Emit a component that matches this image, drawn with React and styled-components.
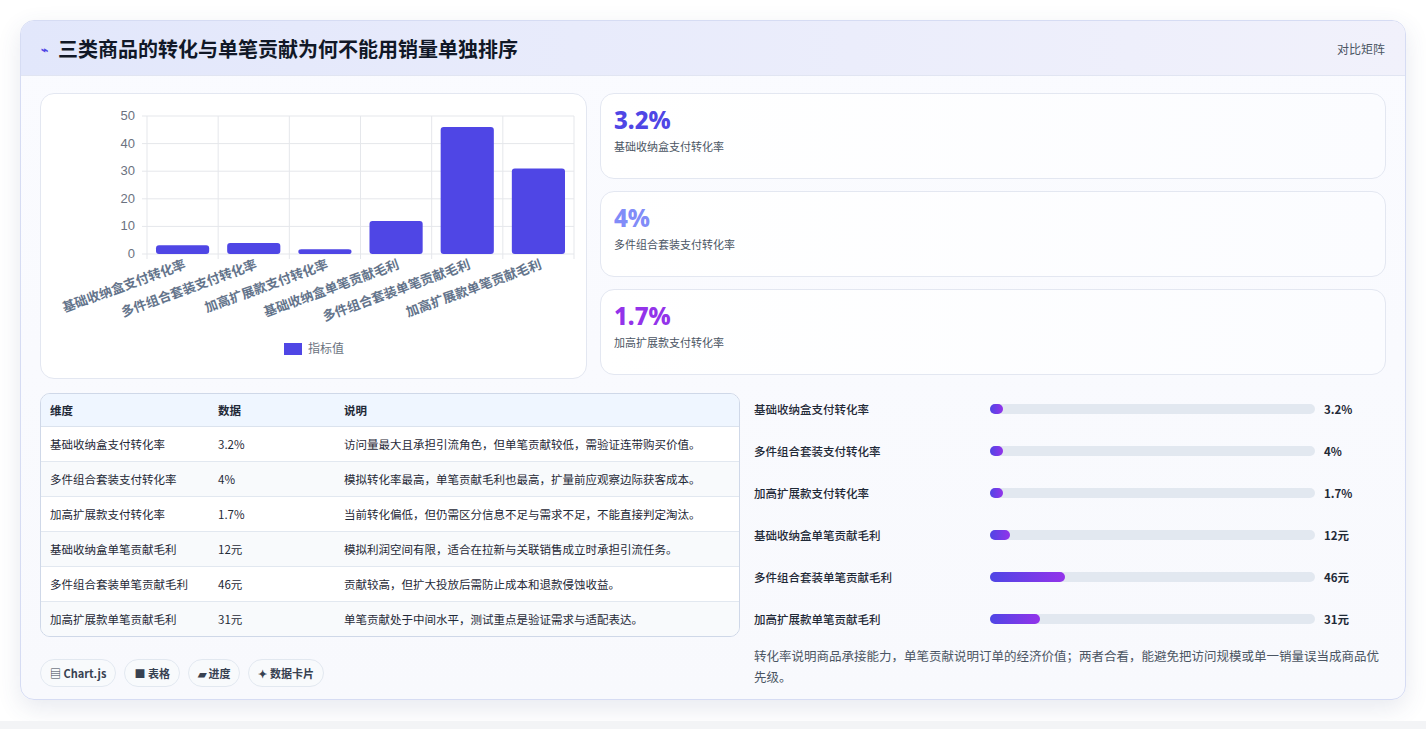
import styled, { createGlobalStyle } from "styled-components";

const Global = createGlobalStyle`
  body { margin: 0; background: #f3f4f6; font-family: "Noto Sans CJK SC", "Noto Sans", sans-serif; }
`;

const Page = styled.div`
  padding: 20px 20px 21px 20px;
  background: #fff;
`;
const Card = styled.div`
  border: 1px solid #d6dcf3;
  border-radius: 14px;
  background: linear-gradient(180deg, #fafbff, #f8f9fd);
  box-shadow: 0 8px 24px rgba(60, 70, 120, 0.12);
  overflow: hidden;
`;
const Header = styled.div`
  height: 54px;
  display: flex;
  align-items: center;
  justify-content: space-between;
  padding: 0 20px;
  background: linear-gradient(90deg, #e2e7fb, #f1f1fb);
  border-bottom: 1px solid #e1e5f2;
`;
const Title = styled.h1`
  margin: 0;
  font-size: 20px;
  font-weight: 700;
  color: #111827;
  display: flex;
  align-items: center;
  gap: 10px;
`;
const Tag = styled.span`
  font-size: 12px;
  color: #4b5563;
`;
const Body = styled.div`
  padding: 17px 19px 12px 19px;
  display: flex;
  flex-direction: column;
  gap: 14px;
`;
const TopRow = styled.div`
  display: grid;
  grid-template-columns: 547px 1fr;
  gap: 13px;
`;
const Panel = styled.div`
  background: #fff;
  border: 1px solid #e3e7f1;
  border-radius: 14px;
`;
const ChartPanel = styled(Panel)`
  height: 284px;
`;
const Stats = styled.div`
  display: flex;
  flex-direction: column;
  gap: 12px;
`;
const Stat = styled(Panel)`
  height: 86px;
  box-sizing: border-box;
  padding: 10px 13px;
  background: linear-gradient(90deg, #ffffff, #fbfcff);
`;
const StatValue = styled.div`
  font-size: 24px;
  font-weight: 800;
  font-family: "Noto Sans", sans-serif;
  color: ${(p) => p.$c};
  line-height: 32px;
`;
const StatLabel = styled.div`
  font-size: 11px;
  color: #4b5563;
  margin-top: 2px;
`;
const BottomRow = styled.div`
  display: grid;
  grid-template-columns: 700px 1fr;
  gap: 14px;
`;
const Left = styled.div`
  display: flex;
  flex-direction: column;
  gap: 22px;
`;
const Table = styled.table`
  width: 100%;
  border-collapse: separate;
  border-spacing: 0;
  border: 1px solid #cfd8e8;
  border-radius: 10px;
  overflow: hidden;
  font-size: 11.5px;
  color: #1f2937;
  background: #f8fafc;
`;
const Th = styled.th`
  text-align: left;
  font-weight: 600;
  height: 32px;
  padding: 0 9px;
  background: #eff6ff;
  border-bottom: 1px solid #dbe3ee;
`;
const Td = styled.td`
  height: 34px;
  padding: 0 9px;
  border-bottom: ${(p) => (p.$last ? "none" : "1px solid #e2e8f0")};
  background: ${(p) => (p.$alt ? "#f8fafc" : "#fff")};
`;
const Chips = styled.div`
  display: flex;
  gap: 8px;
`;
const Chip = styled.span`
  font-size: 11px;
  font-weight: 600;
  color: #374151;
  border: 1px solid #e2e8f0;
  background: #f8fafc;
  border-radius: 14px;
  padding: 5px 9px;
`;
const Bars = styled.div`
  display: flex;
  flex-direction: column;
  margin-top: -5px;
`;
const BarRow = styled.div`
  display: grid;
  grid-template-columns: 236px 334px 1fr;
  align-items: center;
  height: 42px;
  font-size: 11.5px;
  font-weight: 600;
  color: #1f2937;
`;
const BarLabel = styled.span`
  font-weight: 500;
`;
const Track = styled.div`
  height: 10px;
  background: #e2e8f0;
  border-radius: 5px;
  margin-right: 9px;
`;
const Fill = styled.div`
  height: 100%;
  border-radius: 5px;
  background: linear-gradient(90deg, #4f46e5, #9333ea);
`;
const Note = styled.p`
  margin: 5px 0 0;
  font-size: 12.5px;
  line-height: 21px;
  color: #4b5563;
`;

const labels = ["基础收纳盒支付转化率", "多件组合套装支付转化率", "加高扩展款支付转化率", "基础收纳盒单笔贡献毛利", "多件组合套装单笔贡献毛利", "加高扩展款单笔贡献毛利"];
const values = [3.2, 4, 1.7, 12, 46, 31];
const shown = ["3.2%", "4%", "1.7%", "12元", "46元", "31元"];
const notes = [
  "访问量最大且承担引流角色，但单笔贡献较低，需验证连带购买价值。",
  "模拟转化率最高，单笔贡献毛利也最高，扩量前应观察边际获客成本。",
  "当前转化偏低，但仍需区分信息不足与需求不足，不能直接判定淘汰。",
  "模拟利润空间有限，适合在拉新与关联销售成立时承担引流任务。",
  "贡献较高，但扩大投放后需防止成本和退款侵蚀收益。",
  "单笔贡献处于中间水平，测试重点是验证需求与适配表达。",
];

const Chart = () => {
  const x0 = 106, x1 = 533, y0 = 22, y1 = 160;
  const cw = (x1 - x0) / 6;
  const ys = (v) => y1 - (v / 50) * (y1 - y0);
  return (
    <svg width="546" height="284" style={{ display: "block" }}>
      {[0, 10, 20, 30, 40, 50].map((t) => (
        <g key={t}>
          <line x1={x0 - 5} x2={x1} y1={ys(t)} y2={ys(t)} stroke="#e5e7eb" />
          <text x={x0 - 12} y={ys(t) + 4} fontSize="13" fill="#6b7280" textAnchor="end" fontFamily="Liberation Sans">{t}</text>
        </g>
      ))}
      {[0, 1, 2, 3, 4, 5, 6].map((i) => (
        <line key={i} x1={x0 + i * cw} x2={x0 + i * cw} y1={y0} y2={y1 + 5} stroke="#e5e7eb" />
      ))}
      {values.map((v, i) => (
        <rect key={i} x={x0 + i * cw + 9} width={cw - 18} y={ys(v)} height={y1 - ys(v)} rx="3" fill="#4f46e5" />
      ))}
      {labels.map((l, i) => (
        <text key={l} transform={`translate(${x0 + i * cw + cw / 2 + 4},${y1 + 14}) rotate(-20)`} textAnchor="end" fontSize="13" fontWeight="600" fill="#64748b">{l}</text>
      ))}
      <rect x="243" y="249" width="18" height="12" fill="#4f46e5" />
      <text x="267" y="259" fontSize="12" fill="#6b7280">指标值</text>
    </svg>
  );
};

export default function App() {
  return (
    <Page>
      <Global />
      <Card>
        <Header>
          <Title><span style={{ color: "#4f46e5", fontSize: 12 }}>⌁</span>三类商品的转化与单笔贡献为何不能用销量单独排序</Title>
          <Tag>对比矩阵</Tag>
        </Header>
        <Body>
          <TopRow>
            <ChartPanel><Chart /></ChartPanel>
            <Stats>
              <Stat><StatValue $c="#4f46e5">3.2%</StatValue><StatLabel>基础收纳盒支付转化率</StatLabel></Stat>
              <Stat><StatValue $c="#818cf8">4%</StatValue><StatLabel>多件组合套装支付转化率</StatLabel></Stat>
              <Stat><StatValue $c="#9333ea">1.7%</StatValue><StatLabel>加高扩展款支付转化率</StatLabel></Stat>
            </Stats>
          </TopRow>
          <BottomRow>
            <Left>
              <Table>
                <thead>
                  <tr><Th style={{ width: 150 }}>维度</Th><Th style={{ width: 108 }}>数据</Th><Th>说明</Th></tr>
                </thead>
                <tbody>
                  {labels.map((l, i) => (
                    <tr key={l}>
                      <Td $alt={i % 2 === 1} $last={i === 5}>{l}</Td>
                      <Td $alt={i % 2 === 1} $last={i === 5}>{shown[i]}</Td>
                      <Td $alt={i % 2 === 1} $last={i === 5}>{notes[i]}</Td>
                    </tr>
                  ))}
                </tbody>
              </Table>
              <Chips>
                <Chip>▤ Chart.js</Chip>
                <Chip>■ 表格</Chip>
                <Chip>▰ 进度</Chip>
                <Chip>✦ 数据卡片</Chip>
              </Chips>
            </Left>
            <div>
              <Bars>
                {labels.map((l, i) => (
                  <BarRow key={l}>
                    <BarLabel>{l}</BarLabel>
                    <Track><Fill style={{ width: `${Math.max((values[i] / 200) * 100, 4)}%` }} /></Track>
                    <span>{shown[i]}</span>
                  </BarRow>
                ))}
              </Bars>
              <Note>转化率说明商品承接能力，单笔贡献说明订单的经济价值；两者合看，能避免把访问规模或单一销量误当成商品优先级。</Note>
            </div>
          </BottomRow>
        </Body>
      </Card>
    </Page>
  );
}
